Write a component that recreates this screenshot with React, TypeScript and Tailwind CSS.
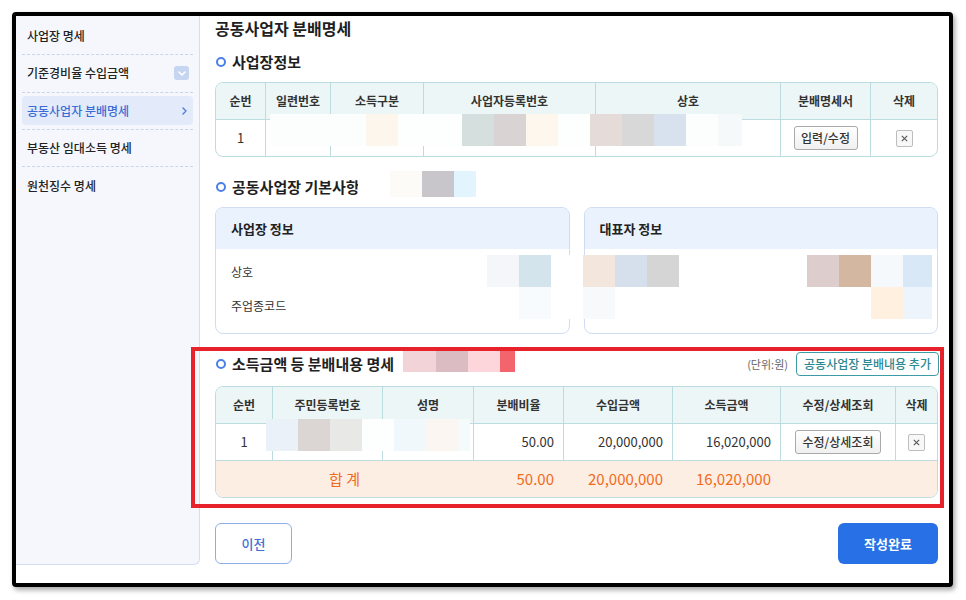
import React from "react";

type Block = { w: string; bg: string };

const navItems = [
  { label: "사업장 명세" },
  { label: "기준경비율 수입금액", badge: true },
  { label: "공동사업자 분배명세", active: true },
  { label: "부동산 임대소득 명세" },
  { label: "원천징수 명세" },
];

// pixelated (masked) areas laid over private values
function Mosaic({ pos, h, rows }: { pos: string; h: string; rows: Block[][] }) {
  return (
    <div className={`absolute flex flex-col ${pos}`}>
      {rows.map((row, r) => (
        <div key={r} className="flex">
          {row.map((b, c) => (
            <div key={c} className={`${h} ${b.w} ${b.bg}`} />
          ))}
        </div>
      ))}
    </div>
  );
}

function Bullet() {
  return <span className="inline-block w-[10px] h-[10px] rounded-full border-[2.5px] border-[#4a80e8] bg-white mr-[6px] shrink-0" />;
}

function SectionTitle({ children }: { children: React.ReactNode }) {
  return (
    <div className="flex items-center h-[24px] pl-[1px] text-[15px] font-bold text-[#1f1f1f]">
      <Bullet />
      {children}
    </div>
  );
}

function XBox() {
  return (
    <span className="inline-flex items-center justify-center w-[17px] h-[17px] border border-[#bdbdbd] rounded-[2px] bg-[#f8f8f8] text-[#555]">
      <svg width="7" height="7" viewBox="0 0 7 7">
        <path d="M0.8 0.8 L6.2 6.2 M6.2 0.8 L0.8 6.2" stroke="#555" strokeWidth="1.1" />
      </svg>
    </span>
  );
}

function SmallButton({ children, w }: { children: React.ReactNode; w: string }) {
  return (
    <span className={`inline-flex items-center justify-center h-[24px] ${w} border border-[#a9a9a9] rounded-[3px] bg-gradient-to-b from-white to-[#f0f0f0] text-[12px] font-medium text-[#333]`}>
      {children}
    </span>
  );
}

const th = "flex items-center justify-center";
const bl = "border-l border-[#bcdcdf]";

export default function App() {
  return (
    <div className="relative w-[966px] h-[600px] bg-white overflow-hidden font-['Noto_Sans_CJK_KR','Noto_Sans',sans-serif] text-[#222]">
      <div className="absolute left-[12px] top-[12px] w-[941px] h-[575px] border-[4px] border-black rounded-[4px] shadow-[2px_3px_5px_rgba(0,0,0,0.35)] bg-white flex overflow-hidden">
        {/* side navigation */}
        <aside className="w-[184px] h-[549px] shrink-0 bg-[#f5f7fd] border-r border-b border-[#d3def2] rounded-br-[6px] px-[6px] pt-[2px]">
          {navItems.map((it, i) => (
            <div
              key={it.label}
              className={`h-[37.33px] flex items-center ${i < 4 ? "border-b border-dashed border-[#c8d5ec]" : ""}`}
            >
              <div
                className={`flex-1 h-[29px] flex items-center justify-between pl-[5px] rounded-[4px] text-[12px] font-medium ${
                  it.active ? "bg-[#e3ebfb] text-[#3b6cd6] pr-[6px]" : "text-[#222] pr-[4px]"
                }`}
              >
                <span>{it.label}</span>
                {it.badge && (
                  <span className="w-[15px] h-[14px] rounded-[3px] bg-[#c6d5f0] flex items-center justify-center">
                    <svg width="8" height="5" viewBox="0 0 8 5">
                      <path d="M1 1 L4 4 L7 1" stroke="white" strokeWidth="1.6" fill="none" strokeLinecap="round" strokeLinejoin="round" />
                    </svg>
                  </span>
                )}
                {it.active && (
                  <svg width="5" height="8" viewBox="0 0 5 8">
                    <path d="M1 1 L4 4 L1 7" stroke="#4d7be0" strokeWidth="1.4" fill="none" strokeLinecap="round" strokeLinejoin="round" />
                  </svg>
                )}
              </div>
            </div>
          ))}
        </aside>

        {/* main content */}
        <main className="flex-1 pl-[15px] pr-[11px] flex flex-col">
          <h1 className="h-[24px] flex items-center text-[16px] font-bold text-[#1f1f1f]">공동사업자 분배명세</h1>

          <div className="mt-[10px]">
            <SectionTitle>사업장정보</SectionTitle>
          </div>

          <div className="mt-[8px] border border-[#bcdcdf] rounded-[8px] overflow-hidden">
            <div className="grid grid-cols-[49px_65px_93px_172px_185px_90px_1fr] h-[37px] bg-[#edf6f6] border-b border-[#bcdcdf] text-[12px] font-semibold text-[#333]">
              <div className={th}>순번</div>
              <div className={`${th} ${bl}`}>일련번호</div>
              <div className={`${th} ${bl}`}>소득구분</div>
              <div className={`${th} ${bl}`}>사업자등록번호</div>
              <div className={`${th} ${bl}`}>상호</div>
              <div className={`${th} ${bl}`}>분배명세서</div>
              <div className={`${th} ${bl}`}>삭제</div>
            </div>
            <div className="grid grid-cols-[49px_65px_93px_172px_185px_90px_1fr] h-[36px] text-[13px] text-[#333]">
              <div className={th}>1</div>
              <div className={`${th} ${bl}`} />
              <div className={`${th} ${bl}`} />
              <div className={`${th} ${bl}`} />
              <div className={`${th} ${bl}`} />
              <div className={`${th} ${bl}`}>
                <SmallButton w="w-[64px]">입력/수정</SmallButton>
              </div>
              <div className={`${th} ${bl}`}>
                <XBox />
              </div>
            </div>
          </div>

          <div className="mt-[18px]">
            <SectionTitle>공동사업장 기본사항</SectionTitle>
          </div>

          <div className="mt-[8px] grid grid-cols-2 gap-[14px]">
            {[
              { title: "사업장 정보", rows: ["상호", "주업종코드"] },
              { title: "대표자 정보", rows: ["", ""] },
            ].map((card) => (
              <div key={card.title} className="border border-[#cfdcf2] rounded-[8px] overflow-hidden">
                <div className="h-[41px] bg-[#eaf2fe] flex items-center pl-[15px] text-[13px] font-bold text-[#222]">
                  {card.title}
                </div>
                <div className="pt-[6px] pb-[10px] pl-[15px]">
                  {card.rows.map((r, i) => (
                    <div key={i} className="h-[34px] flex items-center text-[12px] text-[#333]">
                      {r}
                    </div>
                  ))}
                </div>
              </div>
            ))}
          </div>

          <div className="mt-[18px] h-[24px] flex items-center justify-between">
            <SectionTitle>소득금액 등 분배내용 명세</SectionTitle>
            <div className="flex items-center gap-[8px]">
              <span className="text-[11px] text-[#666]">(단위:원)</span>
              <span className="h-[24px] w-[143px] -mr-[1px] inline-flex items-center justify-center border border-[#3d9ba5] rounded-[4px] text-[12px] font-medium text-[#2b8791]">
                공동사업장 분배내용 추가
              </span>
            </div>
          </div>

          <div className="mt-[10px] border border-[#bcdcdf] rounded-[8px] overflow-hidden">
            <div className="grid grid-cols-[56px_110px_91px_90px_109px_108px_115px_1fr] h-[37px] bg-[#edf6f6] border-b border-[#bcdcdf] text-[12px] font-semibold text-[#333]">
              <div className={th}>순번</div>
              <div className={`${th} ${bl}`}>주민등록번호</div>
              <div className={`${th} ${bl}`}>성명</div>
              <div className={`${th} ${bl}`}>분배비율</div>
              <div className={`${th} ${bl}`}>수입금액</div>
              <div className={`${th} ${bl}`}>소득금액</div>
              <div className={`${th} ${bl}`}>수정/상세조회</div>
              <div className={`${th} ${bl}`}>삭제</div>
            </div>
            <div className="grid grid-cols-[56px_110px_91px_90px_109px_108px_115px_1fr] h-[37px] border-b border-[#bcdcdf] text-[13px] text-[#333]">
              <div className={th}>1</div>
              <div className={bl} />
              <div className={bl} />
              <div className={`${bl} flex items-center justify-end pr-[9px]`}>50.00</div>
              <div className={`${bl} flex items-center justify-end pr-[9px]`}>20,000,000</div>
              <div className={`${bl} flex items-center justify-end pr-[9px]`}>16,020,000</div>
              <div className={`${th} ${bl}`}>
                <SmallButton w="w-[86px]">수정/상세조회</SmallButton>
              </div>
              <div className={`${th} ${bl}`}>
                <XBox />
              </div>
            </div>
            <div className="grid grid-cols-[56px_110px_91px_90px_109px_108px_115px_1fr] h-[36px] bg-[#fdeee3] text-[15px] font-normal text-[#f26a1b]">
              <div className="col-span-3 flex items-center justify-center">합 계</div>
              <div className="flex items-center justify-end pr-[9px]">50.00</div>
              <div className="flex items-center justify-end pr-[9px]">20,000,000</div>
              <div className="flex items-center justify-end pr-[9px]">16,020,000</div>
              <div />
              <div />
            </div>
          </div>

          <div className="mt-[25px] flex justify-between">
            <button className="w-[77px] h-[41px] border border-[#8daeea] rounded-[6px] bg-white text-[13px] font-medium text-[#3e6fd6]">
              이전
            </button>
            <button className="w-[100px] h-[41px] rounded-[6px] bg-[#2770e6] text-[13px] font-bold text-white">
              작성완료
            </button>
          </div>
        </main>
      </div>

      <Mosaic
        pos="left-[270px] top-[114px]"
        h="h-[32px]"
        rows={[
          [
            { w: "w-[96px]", bg: "bg-[#fcfefe]" },
            { w: "w-[32px]", bg: "bg-[#fcf6ec]" },
            { w: "w-[64px]", bg: "bg-[#fdfefe]" },
            { w: "w-[32px]", bg: "bg-[#d5dfde]" },
            { w: "w-[32px]", bg: "bg-[#d9d3d3]" },
            { w: "w-[32px]", bg: "bg-[#fdf7ee]" },
            { w: "w-[32px]", bg: "bg-[#fdfefe]" },
            { w: "w-[32px]", bg: "bg-[#e5dcda]" },
            { w: "w-[32px]", bg: "bg-[#d8d8d8]" },
            { w: "w-[32px]", bg: "bg-[#d8e2ef]" },
            { w: "w-[32px]", bg: "bg-[#fcfdfd]" },
            { w: "w-[24px]", bg: "bg-[#f6f9f9]" },
          ],
        ]}
      />
      <Mosaic
        pos="left-[358px] top-[171px]"
        h="h-[26px]"
        rows={[
          [
            { w: "w-[32px]", bg: "bg-white" },
            { w: "w-[32px]", bg: "bg-[#fdfbf8]" },
            { w: "w-[32px]", bg: "bg-[#c8c6cb]" },
            { w: "w-[22px]", bg: "bg-[#e2f4fe]" },
          ],
        ]}
      />
      <Mosaic
        pos="left-[487px] top-[255px]"
        h="h-[32px]"
        rows={[
          [
            { w: "w-[32px]", bg: "bg-[#f5f6f9]" },
            { w: "w-[32px]", bg: "bg-[#d3e4ec]" },
            { w: "w-[32px]", bg: "bg-white" },
            { w: "w-[32px]", bg: "bg-[#f3e6dc]" },
            { w: "w-[32px]", bg: "bg-[#d5e0ec]" },
            { w: "w-[32px]", bg: "bg-[#d5d5d5]" },
            { w: "w-[128px]", bg: "bg-white" },
            { w: "w-[32px]", bg: "bg-[#ddcdcd]" },
            { w: "w-[32px]", bg: "bg-[#d4b7a0]" },
            { w: "w-[32px]", bg: "bg-[#f6f9fb]" },
            { w: "w-[29px]", bg: "bg-[#d9e8f6]" },
          ],
          [
            { w: "w-[32px]", bg: "bg-white" },
            { w: "w-[32px]", bg: "bg-[#f7fbfd]" },
            { w: "w-[32px]", bg: "bg-white" },
            { w: "w-[32px]", bg: "bg-[#f7f9fb]" },
            { w: "w-[256px]", bg: "bg-white" },
            { w: "w-[32px]", bg: "bg-[#fff0e0]" },
            { w: "w-[29px]", bg: "bg-[#eef4fb]" },
          ],
        ]}
      />
      <Mosaic
        pos="left-[403px] top-[348px]"
        h="h-[24px]"
        rows={[
          [
            { w: "w-[33px]", bg: "bg-[#f2d4d8]" },
            { w: "w-[32px]", bg: "bg-[#dbbcc2]" },
            { w: "w-[32px]", bg: "bg-[#fdd6db]" },
            { w: "w-[15px]", bg: "bg-[#f3646d]" },
          ],
        ]}
      />
      <Mosaic
        pos="left-[266px] top-[419px]"
        h="h-[32px]"
        rows={[
          [
            { w: "w-[32px]", bg: "bg-[#eaf1f9]" },
            { w: "w-[32px]", bg: "bg-[#dbd5d3]" },
            { w: "w-[32px]", bg: "bg-[#e8e8e7]" },
            { w: "w-[32px]", bg: "bg-[#fdfefe]" },
            { w: "w-[32px]", bg: "bg-[#f1f8fb]" },
            { w: "w-[32px]", bg: "bg-[#fbf6f1]" },
            { w: "w-[12px]", bg: "bg-[#f5fafa]" },
          ],
        ]}
      />

      {/* highlight box around the distribution section */}
      <div className="absolute left-[191px] top-[347px] w-[753px] h-[161px] border-[4px] border-[#e8222b] pointer-events-none" />
    </div>
  );
}
